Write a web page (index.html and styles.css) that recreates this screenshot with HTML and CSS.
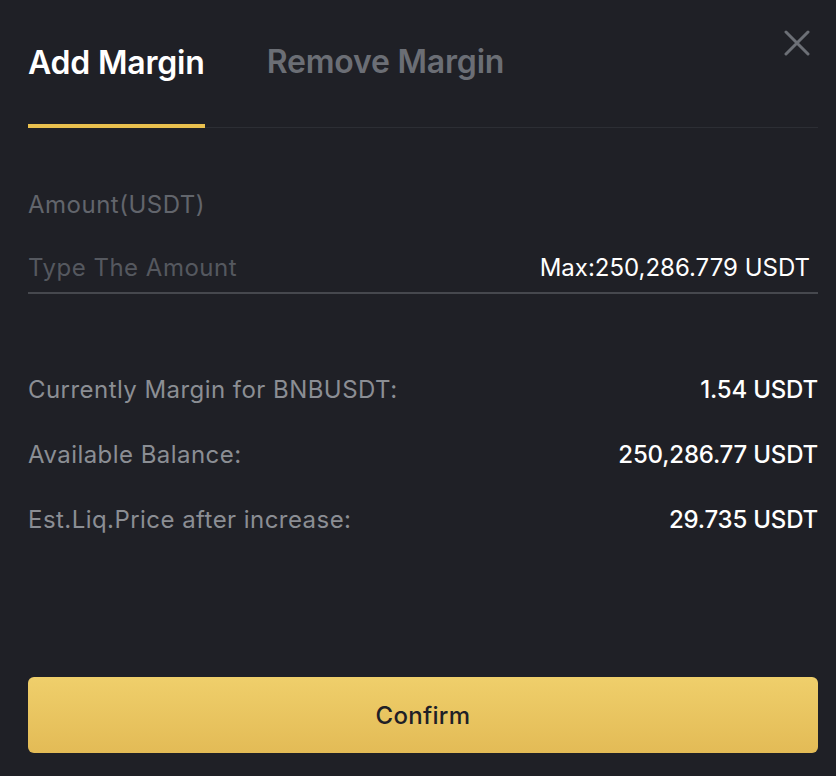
FILE: index.html
```html
<!DOCTYPE html>
<html lang="en">
<head>
<meta charset="utf-8">
<link rel="stylesheet" href="styles.css">
</head>
<body>
<div class="modal">
  <div class="header">
    <div class="tabs">
      <div class="tab active">Add Margin</div>
      <div class="tab">Remove Margin</div>
    </div>
    <button class="close" aria-label="Close">
      <svg width="26" height="26" viewBox="0 0 26 26"><path d="M2 2L24 24M24 2L2 24" stroke="#6c6f76" stroke-width="3" stroke-linecap="round"/></svg>
    </button>
  </div>
  <div class="field">
    <div class="field-label">Amount(USDT)</div>
    <div class="input-row">
      <span class="placeholder">Type The Amount</span>
      <span class="max">Max:250,286.779 USDT</span>
    </div>
  </div>
  <div class="rows">
    <div class="row"><span class="k">Currently Margin for BNBUSDT:</span><span class="v">1.54 USDT</span></div>
    <div class="row"><span class="k">Available Balance:</span><span class="v">250,286.77 USDT</span></div>
    <div class="row"><span class="k">Est.Liq.Price after increase:</span><span class="v">29.735 USDT</span></div>
  </div>
  <button class="confirm">Confirm</button>
</div>
</body>
</html>
```
FILE: styles.css
```css
* { box-sizing: border-box; }
html, body { margin: 0; padding: 0; }
body {
  background: #1f2026;
  font-family: Inter, Roboto, "Liberation Sans", sans-serif;
  width: 836px;
  height: 776px;
  overflow: hidden;
}
.modal {
  padding: 0 18px 0 28px;
  display: flex;
  flex-direction: column;
}
.header {
  position: relative;
  display: flex;
  border-bottom: 1px solid #2c2e34;
  height: 128px;
}
.tabs {
  display: flex;
  gap: 62px;
  align-items: flex-end;
}
.tab {
  font-size: 32px;
  font-weight: 600;
  letter-spacing: -0.2px;
  color: #6b6e75;
  height: 128px;
  padding-top: 43px;
  line-height: 40px;
}
.tab.active {
  color: #ffffff;
  border-bottom: 4px solid #e9c04e;
  margin-bottom: -1px;
}
.close {
  position: absolute;
  right: 8px;
  top: 30px;
  background: none;
  border: 0;
  padding: 0;
  width: 26px;
  height: 26px;
}
.close svg { display: block; }
.field {
  margin-top: 62px;
}
.field-label {
  font-size: 24px;
  letter-spacing: 0.5px;
  color: #62656c;
  line-height: 30px;
}
.input-row {
  margin-top: 32px;
  display: flex;
  justify-content: space-between;
  align-items: center;
  height: 42px;
  border-bottom: 2px solid #46484e;
  padding-bottom: 10px;
  padding-right: 8px;
}
.placeholder {
  font-size: 24px;
  letter-spacing: 0.5px;
  color: #55585f;
}
.max {
  font-size: 24px;
  color: #ffffff;
}
.rows {
  margin-top: 81px;
  display: flex;
  flex-direction: column;
  gap: 35px;
}
.row {
  display: flex;
  justify-content: space-between;
  font-size: 24px;
  line-height: 30px;
}
.k { color: #8b8e94; letter-spacing: 0.45px; }
.v { color: #ffffff; font-weight: 500; letter-spacing: -0.2px; }
.confirm {
  margin-top: 142px;
  height: 76px;
  border: 0;
  border-radius: 6px;
  background: linear-gradient(#efcf6b, #e3bb56);
  font-family: Inter, Roboto, "Liberation Sans", sans-serif;
  font-size: 24px;
  letter-spacing: 0.3px;
  font-weight: 500;
  color: #1f2026;
}
```
